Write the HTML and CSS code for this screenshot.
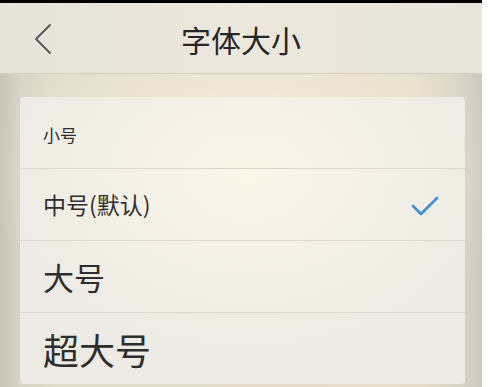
FILE: index.html
```html
<!DOCTYPE html>
<html lang="zh-CN">
<head>
<meta charset="utf-8">
<title>字体大小</title>
<link rel="stylesheet" href="styles.css">
</head>
<body>
<div class="page">
  <div class="screen">
    <div class="statusbar"></div>
    <header class="header">
      <button class="back" aria-label="返回">
        <svg width="20" height="32" viewBox="0 0 20 32"><path d="M17 2 L3 16 L17 30" fill="none" stroke="#555" stroke-width="1.8" stroke-linecap="round" stroke-linejoin="round"/></svg>
      </button>
      <h1 class="title">字体大小</h1>
      <span class="spacer"></span>
    </header>
    <main class="content">
      <ul class="card">
        <li class="row size-s">小号</li>
        <li class="row size-m"><span>中号(默认)</span>
          <svg class="check" width="28" height="20" viewBox="0 0 28 20"><path d="M2 10 L10 18 L26 2" fill="none" stroke="#3b8fdc" stroke-width="2.6" stroke-linecap="round" stroke-linejoin="round"/></svg>
        </li>
        <li class="row size-l">大号</li>
        <li class="row size-xl">超大号</li>
      </ul>
    </main>
  </div>
  <div class="edge"></div>
</div>
</body>
</html>
```
FILE: styles.css
```css
* { box-sizing: border-box; }
html, body { margin: 0; padding: 0; background: #fff; }
body { font-family: "Noto Sans CJK SC", "Noto Sans", sans-serif; color: #2e2e2e; }
.page { display: flex; width: 496px; height: 387px; overflow: hidden; }
.screen {
  width: 482px;
  height: 387px;
  display: flex;
  flex-direction: column;
  background:
    radial-gradient(ellipse 260px 200px at 250px 175px, rgba(250,243,225,0.9), rgba(250,243,225,0) 100%),
    linear-gradient(90deg, #c8c4b8 0px, #d9d4c6 20px, #e2dccb 60px, #e4ddca 420px, #d6d1c4 465px, #cdc9be 482px);
}
.edge { flex: 1; background: #fff; }
.statusbar { height: 3px; background: #000; flex: none; }
.header {
  height: 71px;
  flex: none;
  display: flex;
  align-items: center;
  background: linear-gradient(90deg, #e6e3da, #ece8dd 50%, #e8e5dc);
  border-bottom: 1px solid #d2cec4;
  padding: 0 0 0 33px;
}
.back { background: none; border: 0; padding: 0; width: 20px; height: 32px; display: flex; margin-top: 2px; }
.title {
  flex: 1;
  margin: 0 0 0 0;
  text-align: center;
  font-size: 30px;
  font-weight: 400;
  color: #262626;
  padding-right: 50px;
  line-height: 1;
  margin-top: 1px;
}
.spacer { width: 3px; }
.content { padding: 23px 17px 0 20px; }
.card {
  list-style: none;
  margin: 0;
  padding: 0;
  border-radius: 3px;
  background:
    radial-gradient(ellipse 240px 170px at 228px 80px, #faf6ea, rgba(250,246,234,0) 100%),
    #eeebe4;
  box-shadow: 0 0 1px rgba(0,0,0,0.08);
}
.row {
  height: 72px;
  display: flex;
  align-items: center;
  justify-content: space-between;
  padding: 0 26px 0 23px;
  border-top: 1px solid #dcd8cf;
  line-height: 1;
}
.row:first-child { border-top: 0; height: 71px; }
.size-s { font-size: 17px; padding-top: 4px; }
.size-m { font-size: 23px; }
.size-l { font-size: 31px; }
.size-xl { font-size: 36px; }
.check { margin-top: 2px; }
```
